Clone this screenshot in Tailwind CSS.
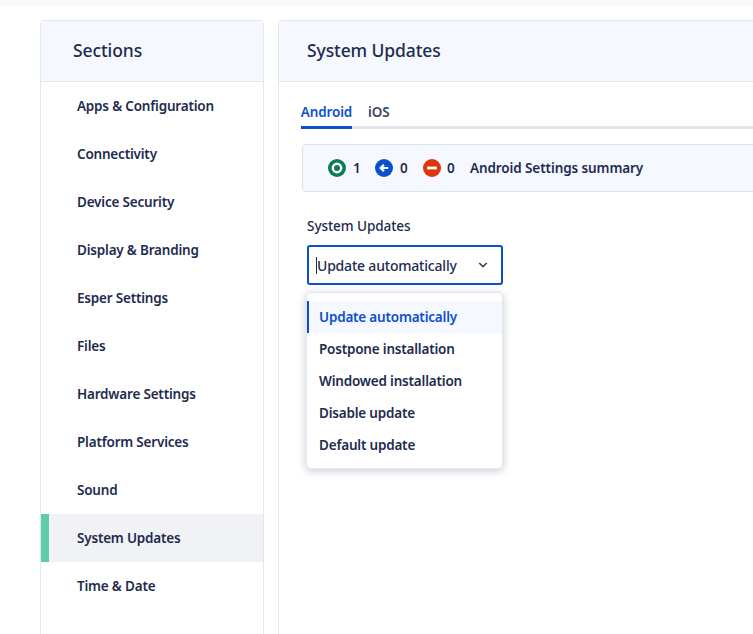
<!doctype html>
<html>
<head>
<meta charset="utf-8">
<script src="https://cdn.jsdelivr.net/npm/@tailwindcss/browser@4"></script>
</head>
<body class="bg-white">
<div class="h-[634px] w-[753px] overflow-hidden font-['Noto_Sans','Open_Sans',sans-serif] text-[#1e2b4f] font-semibold">
  <div class="h-[6px] bg-[#f8f9fb]"></div>
  <div class="flex gap-[14px] pl-10 pt-[14px]">
    <aside class="w-[224px] h-[700px] shrink-0 border border-[#e4e7ef] rounded-t-[4px] overflow-hidden">
      <div class="h-[61px] bg-[#f5f8ff] border-b border-[#e4e7ef] flex items-center pl-[32px] pb-px text-[17.5px] font-medium tracking-[-0.1px]">Sections</div>
      <nav class="text-[13.5px] tracking-[-0.2px]">
        <div class="h-12 flex items-center pl-[36px]">Apps &amp; Configuration</div>
        <div class="h-12 flex items-center pl-[36px]">Connectivity</div>
        <div class="h-12 flex items-center pl-[36px]">Device Security</div>
        <div class="h-12 flex items-center pl-[36px]">Display &amp; Branding</div>
        <div class="h-12 flex items-center pl-[36px]">Esper Settings</div>
        <div class="h-12 flex items-center pl-[36px]">Files</div>
        <div class="h-12 flex items-center pl-[36px]">Hardware Settings</div>
        <div class="h-12 flex items-center pl-[36px]">Platform Services</div>
        <div class="h-12 flex items-center pl-[36px]">Sound</div>
        <div class="h-12 flex items-center pl-[28px] bg-[#f0f2f6] border-l-[8px] border-[#5ccda6]">System Updates</div>
        <div class="h-12 flex items-center pl-[36px]">Time &amp; Date</div>
      </nav>
    </aside>
    <main class="w-[600px] h-[700px] shrink-0 border border-[#e4e7ef] rounded-t-[4px] overflow-hidden">
      <div class="h-[61px] bg-[#f5f8ff] border-b border-[#e4e7ef] flex items-center pl-[28px] pb-px text-[17.5px] font-medium tracking-[-0.1px]">System Updates</div>
      <div class="pl-[22px]">
        <div class="flex h-[47px] border-b-[3px] border-[#e4e6ee] text-[13.5px] tracking-[-0.15px]">
          <div class="h-[47px] w-[51px] flex items-center pt-[17px] justify-center border-b-[3px] border-[#0b4fcf] text-[#0b4fcf] whitespace-nowrap">Android</div>
          <div class="h-[44px] ml-[16px] flex items-center pt-[17px] text-[#3c4660]">iOS</div>
        </div>
        <div class="ml-px mt-[15px] h-[48px] w-[500px] bg-[#f5f8ff] border border-[#dde1ea] rounded-[4px] flex items-center pl-[25px] text-[13.5px]">
          <svg class="w-[18px] h-[18px]" viewBox="0 0 18 18"><circle cx="9" cy="9" r="9" fill="#0a7d52"/><circle cx="9" cy="9" r="4.2" fill="none" stroke="#fff" stroke-width="2.4"/></svg>
          <span class="ml-[7px] w-[15px]">1</span>
          <svg class="ml-[7px] w-[18px] h-[18px]" viewBox="0 0 18 18"><circle cx="9" cy="9" r="9" fill="#0b4fcf"/><path d="M13.2 9H6.2M9 5.8 5.6 9 9 12.2" fill="none" stroke="#fff" stroke-width="2.1"/></svg>
          <span class="ml-[7px] w-[16px]">0</span>
          <svg class="ml-[7px] w-[18px] h-[18px]" viewBox="0 0 18 18"><circle cx="9" cy="9" r="9" fill="#de350b"/><rect x="4.2" y="7.6" width="9.6" height="2.8" fill="#fff"/></svg>
          <span class="ml-[6px] w-[23px]">0</span>
          <span class="tracking-[-0.1px] whitespace-nowrap">Android Settings summary</span>
        </div>
        <div class="ml-[6px] mt-[24px] w-[196px] relative">
          <div class="h-5 flex items-center text-[13.6px] tracking-[-0.1px] font-medium">System Updates</div>
          <div class="mt-[9px] h-10 border-2 border-[#0b4fcf] rounded-[3px] flex items-center justify-between pl-2 pr-[13px] text-[14px] font-medium">
            <span class="-ml-px border-l border-[#1e2b4f] leading-[17px] whitespace-nowrap tracking-[-0.2px]">Update automatically</span>
            <svg class="w-[10px] h-[6px]" viewBox="0 0 10 6"><path d="M1.2 1 5 4.6 8.8 1" fill="none" stroke="#3a4660" stroke-width="1.7"/></svg>
          </div>
          <div class="absolute -left-px top-[76px] w-[197px] h-[177px] py-2 bg-white border border-[#e4e7ef] rounded-[5px] shadow-[0_2px_8px_rgba(30,43,79,0.25)] text-[13.5px] tracking-[-0.2px]">
            <div class="h-8 flex items-center pl-[10px] bg-[#f5f8ff] border-l-2 border-[#0b4fcf] text-[#0b4fcf]">Update automatically</div>
            <div class="h-8 flex items-center pl-[12px]">Postpone installation</div>
            <div class="h-8 flex items-center pl-[12px]">Windowed installation</div>
            <div class="h-8 flex items-center pl-[12px]">Disable update</div>
            <div class="h-8 flex items-center pl-[12px]">Default update</div>
          </div>
        </div>
      </div>
    </main>
  </div>
</div>
</body>
</html>
